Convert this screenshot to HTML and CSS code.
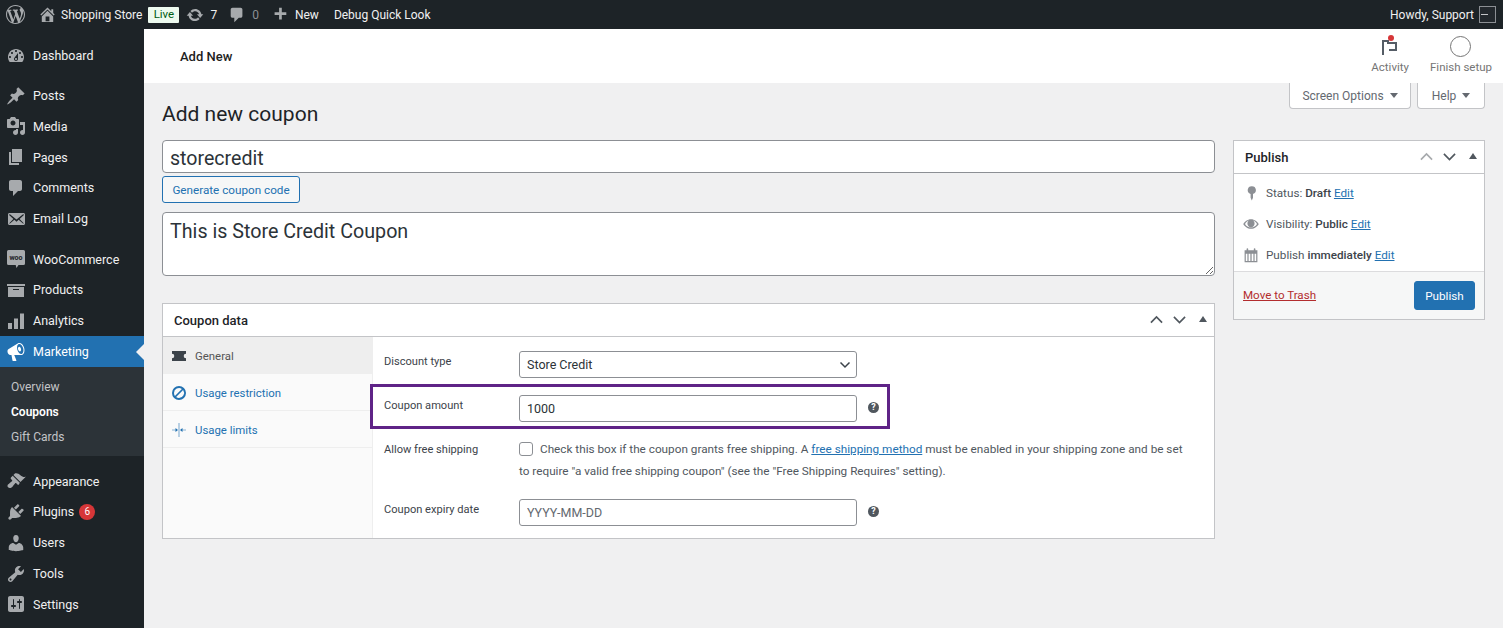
FILE: index.html
```html
<!DOCTYPE html>
<html lang="en">
<head>
<meta charset="utf-8">
<title>Add new coupon</title>
<link rel="stylesheet" href="styles.css">
</head>
<body>
<header class="adminbar">
  <div class="ab-left">
    <svg class="ab-logo" viewBox="0 0 20 20"><path d="M20 10c0-5.51-4.49-10-10-10C4.48 0 0 4.49 0 10c0 5.52 4.48 10 10 10 5.51 0 10-4.48 10-10zM7.78 15.37L4.37 6.22c.55-.02 1.17-.08 1.17-.08.5-.06.44-1.13-.06-1.11 0 0-1.45.11-2.37.11-.18 0-.37 0-.58-.01C4.12 2.69 6.87 1.11 10 1.11c2.33 0 4.45.87 6.05 2.34-.68-.11-1.65.39-1.65 1.58 0 .74.45 1.36.9 2.1.35.61.55 1.36.55 2.46 0 1.49-1.4 5-1.4 5l-3.03-8.37c.54-.02.82-.17.82-.17.5-.05.44-1.25-.06-1.22 0 0-1.44.12-2.38.12-.87 0-2.33-.12-2.33-.12-.5-.03-.56 1.2-.06 1.22l.92.08 1.26 3.41zM17.41 10c.24-.64.74-1.87.43-4.25.7 1.29 1.05 2.71 1.05 4.25 0 3.29-1.73 6.24-4.4 7.78.97-2.59 1.94-5.2 2.92-7.78zM6.1 18.09C3.12 16.65 1.11 13.53 1.11 10c0-1.3.23-2.48.72-3.59C3.25 10.3 4.67 14.2 6.1 18.09zm4.03-6.63l2.58 6.98c-.86.29-1.76.45-2.71.45-.79 0-1.57-.11-2.29-.33.81-2.38 1.62-4.74 2.42-7.1z"/></svg>
    <svg class="ab-icon ab-home" viewBox="0 0 20 20"><path d="M16 8.5l1.53 1.53-1.06 1.06L10 4.62l-6.47 6.47-1.06-1.06L10 2.5l4 4v-2h2v4zm-6-2.46l6 5.99V18H4v-5.97zM12 17v-5H8v5h4z"/></svg>
    <span class="ab-site">Shopping Store</span>
    <span class="ab-live">Live</span>
    <svg class="ab-icon ab-update" viewBox="0 0 20 20"><path d="M10.2 3.28c3.53 0 6.43 2.61 6.92 6h2.08l-3.5 4-3.5-4h2.32c-.45-1.97-2.21-3.44-4.32-3.44-1.45 0-2.73.71-3.54 1.78L4.95 5.66C6.23 4.2 8.11 3.28 10.2 3.28zm-.4 13.44c-3.52 0-6.43-2.61-6.92-6H.8l3.5-4c1.17 1.33 2.33 2.67 3.5 4H5.48c.45 1.97 2.21 3.44 4.32 3.44 1.45 0 2.73-.71 3.54-1.78l1.71 1.95c-1.28 1.46-3.15 2.39-5.25 2.39z"/></svg>
    <span class="ab-count">7</span>
    <svg class="ab-icon ab-comment" viewBox="0 0 20 20"><path d="M5 2h9c1.1 0 2 .9 2 2v7c0 1.1-.9 2-2 2h-2l-5 5v-5H5c-1.1 0-2-.9-2-2V4c0-1.1.9-2 2-2z"/></svg>
    <span class="ab-count ab-dim">0</span>
    <svg class="ab-icon ab-plus" viewBox="0 0 20 20"><path d="M17 7v3h-5v5H9v-5H4V7h5V2h3v5h5z"/></svg>
    <span class="ab-new">New</span>
    <span class="ab-debug">Debug Quick Look</span>
  </div>
  <div class="ab-right">
    <span>Howdy, Support</span>
    <span class="ab-avatar"><i class="ab-avatar-mark"></i></span>
  </div>
</header>

<div class="shell">
  <nav class="sidebar">
    <ul class="menu-group">
      <li class="menu-item"><svg class="mi" viewBox="0 0 20 20"><path d="M3.76 16h12.48c1.1-1.37 1.76-3.11 1.76-5 0-4.42-3.58-8-8-8s-8 3.58-8 8c0 1.89.66 3.63 1.76 5zM10 4c.55 0 1 .45 1 1s-.45 1-1 1-1-.45-1-1 .45-1 1-1zM6 6c.55 0 1 .45 1 1s-.45 1-1 1-1-.45-1-1 .45-1 1-1zm8 0c.55 0 1 .45 1 1s-.45 1-1 1-1-.45-1-1 .45-1 1-1zm-5.37 5.55L12 7v6c0 1.1-.9 2-2 2s-2-.9-2-2c0-.57.24-1.08.63-1.45zM4 10c.55 0 1 .45 1 1s-.45 1-1 1-1-.45-1-1 .45-1 1-1zm12 0c.55 0 1 .45 1 1s-.45 1-1 1-1-.45-1-1 .45-1 1-1zm-5 3c0-.55-.45-1-1-1s-1 .45-1 1 .45 1 1 1 1-.45 1-1z"/></svg>Dashboard</li>
    </ul>
    <ul class="menu-group">
      <li class="menu-item"><svg class="mi" viewBox="0 0 20 20"><path d="M10.44 3.02l1.82-1.82 6.36 6.35-1.83 1.82c-1.05-.68-2.48-.57-3.41.36l-.75.75c-.92.93-1.04 2.35-.35 3.41l-1.83 1.82-2.41-2.41-2.8 2.79c-.42.42-3.38 2.71-3.8 2.29s1.86-3.39 2.28-3.81l2.79-2.79L4.1 9.36l1.83-1.82c1.05.69 2.48.57 3.4-.36l.75-.75c.93-.92 1.05-2.35.36-3.41z"/></svg>Posts</li>
      <li class="menu-item"><svg class="mi" viewBox="0 0 20 20"><path d="M13 11V4c0-.55-.45-1-1-1h-1.67L9 1H5L3.67 3H2c-.55 0-1 .45-1 1v7c0 .55.45 1 1 1h10c.55 0 1-.45 1-1zM7 4.5c1.38 0 2.5 1.12 2.5 2.5S8.38 9.5 7 9.5 4.5 8.38 4.5 7 5.62 4.5 7 4.5zM14 6h5v10.5c0 1.38-1.12 2.5-2.5 2.5S14 17.88 14 16.5s1.12-2.5 2.5-2.5c.17 0 .34.02.5.05V9h-3V6zm-4 8.05V13h2v3.5c0 1.38-1.12 2.5-2.5 2.5S7 17.88 7 16.5 8.12 14 9.5 14c.17 0 .34.02.5.05z"/></svg>Media</li>
      <li class="menu-item"><svg class="mi" viewBox="0 0 20 20"><path d="M6 15V2h10v13H6zm-1 1h8v2H3V5h2v11z"/></svg>Pages</li>
      <li class="menu-item"><svg class="mi" viewBox="0 0 20 20"><path d="M5 2h9c1.1 0 2 .9 2 2v7c0 1.1-.9 2-2 2h-2l-5 5v-5H5c-1.1 0-2-.9-2-2V4c0-1.1.9-2 2-2z"/></svg>Comments</li>
      <li class="menu-item"><svg class="mi" viewBox="0 0 20 20"><path d="M19 14.5v-9c0-.83-.67-1.5-1.5-1.5H3.49c-.83 0-1.5.67-1.5 1.5v9c0 .83.67 1.5 1.5 1.5H17.5c.83 0 1.5-.67 1.5-1.5zm-1.31-9.11c.33.33.15.67-.03.84L13.6 9.95l3.9 4.06c.12.14.2.36.06.51-.13.16-.43.15-.56.05l-4.37-3.73-2.14 1.95-2.13-1.95-4.37 3.73c-.13.1-.43.11-.56-.05-.14-.15-.06-.37.06-.51l3.9-4.06-4.06-3.72c-.18-.17-.36-.51-.03-.84s.67-.17.95.07l6.24 5.04 6.25-5.04c.28-.24.62-.4.95-.07z"/></svg>Email Log</li>
    </ul>
    <ul class="menu-group menu-group-woo">
      <li class="menu-item"><svg class="mi mi-woo" viewBox="0 0 20 20"><path d="M2.5 1h15A1.5 1.5 0 0 1 19 2.500v12a1.500 1.500 0 0 1-1.500 1.500H12.500L10.500 19l-.8-3H2.500A1.500 1.500 0 0 1 1 14.500v-12A1.500 1.500 0 0 1 2.500 1z"/><text class="woo-word" x="10" y="11" text-anchor="middle">woo</text></svg>WooCommerce</li>
      <li class="menu-item"><svg class="mi" viewBox="0 0 20 20"><path d="M19 4v2H1V4h18zM2 7h16v10H2V7zm11 3V9H7v1h6z"/></svg>Products</li>
      <li class="menu-item"><svg class="mi" viewBox="0 0 20 20"><path d="M2 12h4v6H2zM8 7.500h4V18H8zM14 2.500h4V18h-4z"/></svg>Analytics</li>
      <li class="menu-item menu-current"><svg class="mi" viewBox="0 0 20 20"><path d="M18.150 5.940c.46 1.620.38 3.220-.02 4.480-.42 1.280-1.260 2.180-2.300 2.480-.16.06-.26.06-.4.06-.06.02-.12.02-.18.02-.06.02-.14.02-.22.02h-6.800l2.220 5.500c.02.14-.06.26-.14.34-.08.10-.24.16-.34.16H6.950c-.1 0-.26-.06-.34-.16-.08-.08-.16-.2-.14-.34l-1-5.500H4.250l-.02-.02c-.5.06-1.080-.18-1.540-.62s-.88-1.080-1.060-1.880c-.24-.8-.2-1.560-.02-2.200.18-.62.58-1.080 1.060-1.300l.02-.02 9-5.400c.1-.06.18-.1.24-.16.06-.04.14-.08.24-.12.16-.08.28-.12.5-.18 1.040-.3 2.240.1 3.220.98s1.780 2.180 2.260 3.860zm-2.580 5.980h-.02c.4-.1.740-.34 1.040-.7.58-.7.860-1.760.860-3.040 0-.64-.1-1.300-.28-1.980-.34-1.360-1.020-2.500-1.780-3.240s-1.680-1.100-2.460-.88c-.82.22-1.400.96-1.700 2-.32 1.040-.28 2.360.06 3.720.38 1.360 1 2.500 1.800 3.240.78.74 1.620 1.100 2.480.88zm-2.540-7.080c.22-.04.42-.02.62.04.38.16.76.48 1.020 1s.42 1.200.42 1.780c0 .3-.04.56-.12.8-.18.48-.44.84-.86.94-.34.1-.8-.06-1.140-.4-.36-.34-.66-.8-.84-1.420-.4-1.240-.1-2.400.9-2.740z"/></svg>Marketing<i class="menu-arrow"></i></li>
      <li class="submenu">
        <a class="sub-item">Overview</a>
        <a class="sub-item sub-current">Coupons</a>
        <a class="sub-item">Gift Cards</a>
      </li>
    </ul>
    <ul class="menu-group">
      <li class="menu-item"><svg class="mi" viewBox="0 0 20 20"><path d="M14.480 11.060L7.410 3.990l1.500-1.500c.5-.56 2.300-.47 3.510.32 1.210.8 1.430 1.280 2.910 2.100 1.180.64 2.450 1.260 4.450.85zm-.71.71L6.700 4.700 4.930 6.470c-.39.39-.39 1.020 0 1.410l1.060 1.060c.39.39.39 1.030 0 1.420-.6.6-1.430 1.110-2.210 1.690-.35.26-.7.53-1.010.84C1.430 13.230.99 15.200 2.100 16.300c1.100 1.110 3.070.67 4.410-.67.31-.31.58-.66.84-1.010.58-.78 1.090-1.610 1.690-2.210.39-.39 1.030-.39 1.420 0l1.060 1.060c.39.39 1.020.39 1.410 0z"/></svg>Appearance</li>
      <li class="menu-item"><svg class="mi" viewBox="0 0 20 20"><path d="M13.110 4.360L9.870 7.600 8 5.730l3.240-3.240c.35-.34 1.050-.2 1.560.32.52.51.66 1.210.31 1.550zm-8 1.770l.91-1.120 9.010 9.010-1.190.84c-.71.71-2.630 1.160-3.820 1.160H6.140L4.900 17.260c-.59.59-1.540.59-2.120 0-.59-.58-.59-1.530 0-2.120l1.240-1.240v-3.880c0-1.130.4-3.190 1.090-3.890zm7.260 3.970l3.240-3.240c.34-.35 1.040-.21 1.550.31.52.51.66 1.210.31 1.550l-3.240 3.250z"/></svg>Plugins<span class="badge">6</span></li>
      <li class="menu-item"><svg class="mi" viewBox="0 0 20 20"><path d="M10 9.250c-2.270 0-2.730-3.440-2.730-3.440C7 4.020 7.820 2 9.970 2c2.160 0 2.980 2.020 2.710 3.810 0 0-.41 3.440-2.680 3.440zm0 2.570L12.720 10c2.390 0 4.520 2.330 4.520 4.530v2.490s-3.650 1.130-7.240 1.130c-3.650 0-7.240-1.130-7.240-1.130v-2.490c0-2.250 1.940-4.480 4.470-4.480z"/></svg>Users</li>
      <li class="menu-item"><svg class="mi" viewBox="0 0 20 20"><path d="M16.680 9.770c-1.340 1.340-3.300 1.670-4.950.99l-5.410 6.520c-.99.99-2.590.99-3.580 0s-.99-2.590 0-3.570l6.520-5.420c-.68-1.650-.35-3.610.99-4.950 1.280-1.280 3.120-1.620 4.720-1.060l-2.890 2.890 2.820 2.820 2.860-2.870c.53 1.580.18 3.390-1.080 4.650zM3.810 16.210c.4.39 1.040.39 1.430 0 .4-.4.4-1.040 0-1.430-.39-.4-1.030-.4-1.430 0-.39.39-.39 1.030 0 1.430z"/></svg>Tools</li>
      <li class="menu-item"><svg class="mi" viewBox="0 0 20 20"><path d="M18 16V4c0-1.100-.9-2-2-2H4c-1.100 0-2 .9-2 2v12c0 1.100.9 2 2 2h12c1.100 0 2-.9 2-2zM8 11h1c.55 0 1 .45 1 1s-.45 1-1 1H8v1.500c0 .28-.22.5-.5.5s-.5-.22-.5-.5V13H6c-.55 0-1-.45-1-1s.45-1 1-1h1V5.500c0-.28.22-.5.5-.5s.5.22.5.5V11zm5-2h-1c-.55 0-1-.45-1-1s.45-1 1-1h1V5.500c0-.28.22-.5.5-.5s.5.22.5.5V7h1c.55 0 1 .45 1 1s-.45 1-1 1h-1v5.500c0 .28-.22.5-.5.5s-.5-.22-.5-.5V9z"/></svg>Settings</li>
    </ul>
  </nav>

  <div class="main">
    <div class="wc-header">
      <h2 class="wc-title">Add New</h2>
      <div class="wc-activity">
        <div class="wc-tool">
          <span class="wc-tool-icon wc-flag">
            <svg class="flag-svg" viewBox="0 0 16 16"><path d="M0 1h7v2h8v9H7v-2h6V5H5V3H2v13H0z"/></svg>
            <i class="flag-dot"></i>
          </span>
          <span class="wc-tool-label">Activity</span>
        </div>
        <div class="wc-tool">
          <span class="wc-tool-icon"><i class="setup-ring"></i></span>
          <span class="wc-tool-label">Finish setup</span>
        </div>
      </div>
    </div>

    <div class="content">
      <div class="title-row">
        <h1 class="page-title">Add new coupon</h1>
        <div class="meta-links">
          <span class="meta-link">Screen Options<i class="caret"></i></span>
          <span class="meta-link">Help<i class="caret"></i></span>
        </div>
      </div>

      <div class="columns">
        <div class="col-main">
          <input class="code-input" type="text" value="storecredit">
          <button class="gen-btn" type="button">Generate coupon code</button>
          <textarea class="desc-input">This is Store Credit Coupon</textarea>

          <section class="box coupon-box">
            <div class="box-head">
              <h2 class="box-title">Coupon data</h2>
              <div class="handles">
                <svg class="h-chev" viewBox="0 0 14 10"><path d="M1 8l6-6 6 6"/></svg>
                <svg class="h-chev" viewBox="0 0 14 10"><path d="M1 2l6 6 6-6"/></svg>
                <i class="h-tri"></i>
              </div>
            </div>
            <div class="coupon-body">
              <ul class="tabs">
                <li class="tab tab-active">
                  <svg class="tab-icon" viewBox="0 0 14 12"><path d="M0 1h14v2.700a2.300 2.300 0 0 0 0 4.600V11H0V8.300a2.300 2.300 0 0 0 0-4.600z"/></svg>General
                </li>
                <li class="tab">
                  <svg class="tab-icon" viewBox="0 0 14 14"><path d="M7 0a7 7 0 1 0 0 14A7 7 0 0 0 7 0zM2 7a5 5 0 0 1 7.900-4.100L2.900 9.900A5 5 0 0 1 2 7zm5 5a5 5 0 0 1-2.900-.9l7-7A5 5 0 0 1 7 12z"/></svg>Usage restriction
                </li>
                <li class="tab">
                  <svg class="tab-icon" viewBox="0 0 14 14"><path d="M6.700 0h.6v14h-.6zM0 6.700h3.500V5L6 7 3.500 9V7.300H0zM14 6.700h-3.500V5L8 7l2.500 2V7.300H14z"/></svg>Usage limits
                </li>
              </ul>
              <div class="panel">
                <div class="field">
                  <label class="f-label">Discount type</label>
                  <div class="f-control">
                    <div class="select">Store Credit
                      <svg class="select-chev" viewBox="0 0 12 8"><path d="M1.500 1.500L6 6l4.500-4.500"/></svg>
                    </div>
                  </div>
                </div>
                <div class="field">
                  <label class="f-label">Coupon amount</label>
                  <div class="f-control">
                    <input class="text-input" type="text" value="1000">
                    <span class="help">?</span>
                  </div>
                  <div class="highlight"></div>
                </div>
                <div class="field">
                  <label class="f-label">Allow free shipping</label>
                  <p class="f-desc"><i class="checkbox"></i>Check this box if the coupon grants free shipping. A <a class="link">free shipping method</a> must be enabled in your shipping zone and be set<br>to require "a valid free shipping coupon" (see the "Free Shipping Requires" setting).</p>
                </div>
                <div class="field">
                  <label class="f-label">Coupon expiry date</label>
                  <div class="f-control">
                    <input class="text-input" type="text" placeholder="YYYY-MM-DD">
                    <span class="help">?</span>
                  </div>
                </div>
              </div>
            </div>
          </section>
        </div>

        <aside class="col-side">
          <section class="box">
            <div class="box-head">
              <h2 class="box-title">Publish</h2>
              <div class="handles">
                <svg class="h-chev h-chev-off" viewBox="0 0 14 10"><path d="M1 8l6-6 6 6"/></svg>
                <svg class="h-chev" viewBox="0 0 14 10"><path d="M1 2l6 6 6-6"/></svg>
                <i class="h-tri"></i>
              </div>
            </div>
            <div class="pub-rows">
              <div class="pub-row"><svg class="pub-icon" viewBox="0 0 20 20"><path d="M11 1.500a5 5 0 0 1 1.500 9.800V16l-1.500 3.500L9.500 16v-4.700A5 5 0 0 1 11 1.500z"/></svg><span>Status: <b>Draft</b> <a class="link">Edit</a></span></div>
              <div class="pub-row"><svg class="pub-icon" viewBox="0 0 20 20"><path fill-rule="evenodd" d="M10 4C5.500 4 2 7 .3 10 2 13 5.500 16 10 16s8-3 9.700-6C18 7 14.500 4 10 4zm0 10.500c-3.300 0-6-2-7.500-4.500C3.700 8 5.500 6.500 7.500 5.700a4.500 4.500 0 1 0 5 0C14.500 6.500 16.300 8 17.500 10c-1.500 2.500-4.200 4.500-7.500 4.500z"/></svg><span>Visibility: <b>Public</b> <a class="link">Edit</a></span></div>
              <div class="pub-row"><svg class="pub-icon" viewBox="0 0 20 20"><path d="M2 4h2.500V2.500a1 1 0 0 1 2 0V4h7V2.500a1 1 0 0 1 2 0V4H18v15H2zm1.500 4.500v9h2v-9zm3.500 0v9h2.200v-9zm3.800 0v9H13v-9zm3.700 0v9h2v-9z"/></svg><span>Publish <b>immediately</b> <a class="link">Edit</a></span></div>
            </div>
            <div class="pub-foot">
              <a class="trash">Move to Trash</a>
              <button class="pub-btn" type="button">Publish</button>
            </div>
          </section>
        </aside>
      </div>
    </div>
  </div>
</div>
</body>
</html>
```
FILE: styles.css
```css
* { box-sizing: border-box; }
html, body { margin: 0; padding: 0; }
body {
  width: 1503px;
  height: 628px;
  overflow: hidden;
  background: #f0f0f1;
  font-family: Roboto, "Noto Sans", "Liberation Sans", sans-serif;
  font-size: 12.500px;
  color: #3c434a;
}
ul { list-style: none; margin: 0; padding: 0; }
h1, h2, p { margin: 0; }
input, textarea, button { font-family: inherit; letter-spacing: inherit; }

/* admin bar */
.adminbar {
  height: 29px;
  background: #1d2327;
  color: #f0f0f1;
  display: flex;
  justify-content: space-between;
  align-items: center;
  font-size: 12px;
}
.ab-left, .ab-right { display: flex; align-items: center; }
.ab-logo { width: 19px; height: 19px; margin-left: 6px; fill: #a7aaad; }
.ab-icon { width: 18px; height: 18px; fill: #a7aaad; flex: none; }
.ab-home { margin-left: 12.500px; width: 19px; height: 19px; }
.ab-site { margin-left: 4.500px; }
.ab-live {
  margin-left: 6px;
  width: 31px;
  height: 16px;
  line-height: 15px;
  text-align: center;
  font-size: 11.500px;
  border-radius: 1px;
  background: #edfaef;
  color: #005c12;
}
.ab-update { margin-left: 7px; }
.ab-count { margin-left: 6px; }
.ab-dim { color: #8c8f94; }
.ab-comment { margin-left: 11px; }
.ab-plus { margin-left: 12px; }
.ab-new { margin-left: 6px; }
.ab-debug { margin-left: 15px; }
.ab-right { padding-right: 7px; gap: 5px; }
.ab-avatar {
  width: 17px;
  height: 17px;
  border: 1px solid #8c8f94;
  background: #23282d;
  display: flex;
  align-items: center;
  padding-left: 1px;
}
.ab-avatar-mark { width: 7px; height: 1px; background: #c3c4c7; }

/* sidebar */
.shell { display: flex; height: 599px; }
.sidebar {
  width: 144px;
  flex: none;
  background: #1d2327;
  padding-top: 11.400px;
}
.menu-group { margin-bottom: 9px; }
.menu-group-woo { margin-top: 9.600px; margin-bottom: 9.800px; }
.menu-item {
  position: relative;
  height: 30.800px;
  display: flex;
  align-items: center;
  padding-left: 6px;
  color: #f0f0f1;
}
.mi { width: 20px; height: 20px; margin-right: 7px; fill: #a7aaad; flex: none; }
.mi-woo { fill: #a7aaad; }
.woo-word { font-size: 7px; font-weight: 700; fill: #1d2327; }
.menu-current { background: #2271b1; color: #fff; }
.menu-current .mi { fill: #fff; }
.menu-arrow {
  position: absolute;
  right: 0;
  top: 50%;
  margin-top: -8px;
  border: 8px solid transparent;
  border-right-color: #f0f0f1;
  border-left-width: 0;
}
.submenu {
  background: #2c3338;
  padding: 8px 0 6px;
}
.sub-item {
  display: block;
  height: 25px;
  line-height: 25px;
  padding-left: 11px;
  font-size: 12px;
  color: #c3c4c7;
}
.sub-current { color: #fff; font-weight: 600; }
.badge {
  width: 16px;
  height: 16px;
  margin-left: 5px;
  border-radius: 50%;
  background: #d63638;
  color: #fff;
  font-size: 10px;
  line-height: 16px;
  text-align: center;
}

/* main */
.main { flex: 1; min-width: 0; background: #f0f0f1; }
.wc-header {
  height: 54px;
  background: #fff;
  display: flex;
  align-items: center;
  justify-content: space-between;
  padding: 0 11px 0 36px;
}
.wc-title { font-size: 13px; font-weight: 500; color: #1e1e1e; }
.wc-activity { display: flex; gap: 21px; margin-top: -2px; }
.wc-tool { display: flex; flex-direction: column; align-items: center; }
.wc-tool-icon {
  position: relative;
  height: 24px;
  display: flex;
  align-items: center;
  justify-content: center;
}
.flag-svg { width: 16px; height: 16px; fill: #555d66; margin-top: 2px; }
.flag-dot {
  position: absolute;
  top: 1px;
  left: 6px;
  width: 6px;
  height: 6px;
  border-radius: 50%;
  background: #d63638;
}
.setup-ring {
  width: 21px;
  height: 21px;
  border-radius: 50%;
  border: 1.500px solid #757575;
}
.wc-tool-label { font-size: 11.500px; line-height: 18px; color: #757575; }

.content { padding: 0 18px; }
.title-row { height: 57px; display: flex; justify-content: space-between; align-items: flex-start; }
.page-title { font-size: 21px; font-weight: 400; line-height: 30px; padding-top: 16px; color: #1d2327; }
.meta-links { display: flex; gap: 6px; }
.meta-link {
  height: 26px;
  display: flex;
  align-items: center;
  justify-content: center;
  font-size: 12px;
  color: #646970;
  background: #fff;
  border: 1px solid #c3c4c7;
  border-top: 0;
  border-radius: 0 0 4px 4px;
  white-space: nowrap;
}
.caret {
  margin-left: 6px;
  border: 4px solid transparent;
  border-top: 5px solid #646970;
  border-bottom: 0;
}
.meta-link:first-child { width: 122px; }
.meta-link:last-child { width: 68px; }

.columns { display: grid; grid-template-columns: 1053px 252px; column-gap: 18px; align-items: start; }

.code-input {
  display: block;
  width: 100%;
  height: 33px;
  padding: 3px 7px 0;
  font-size: 19.600px;
  color: #2c3338;
  background: #fff;
  border: 1px solid #8c8f94;
  border-radius: 4px;
  outline: 0;
}
.gen-btn {
  display: block;
  margin-top: 3px;
  width: 138px;
  height: 27px;
  padding: 0;
  font-size: 11.700px;
  color: #2271b1;
  background: #f6f7f7;
  border: 1px solid #2271b1;
  border-radius: 3px;
}
.desc-input {
  display: block;
  margin-top: 9px;
  width: 100%;
  height: 64px;
  padding: 5px 7px;
  font-size: 19.700px;
  line-height: 27px;
  color: #2c3338;
  background: #fff;
  border: 1px solid #8c8f94;
  border-radius: 4px;
  outline: 0;
  resize: vertical;
}
.box { background: #fff; border: 1px solid #c3c4c7; }
.coupon-box { margin-top: 27px; height: 236px; }
.box-head {
  height: 33px;
  display: flex;
  align-items: center;
  justify-content: space-between;
  padding: 0 7px 0 11px;
  border-bottom: 1px solid #c3c4c7;
}
.box-title { font-size: 13px; font-weight: 500; color: #1d2327; }
.handles { display: flex; align-items: center; gap: 10px; }
.h-chev { width: 13px; height: 9.500px; fill: none; stroke: #50575e; stroke-width: 1.800; }
.h-chev-off { stroke: #a7aaad; }
.h-tri {
  margin-left: 3px;
  border: 4px solid transparent;
  border-bottom: 6px solid #50575e;
  border-top: 0;
  margin-top: -2px;
}

.coupon-body { display: flex; height: 201px; }
.tabs {
  width: 210px;
  flex: none;
  background: #fafafa;
  border-right: 1px solid #eee;
}
.tab {
  height: 37px;
  display: flex;
  align-items: center;
  padding: 1px 0 0 9px;
  font-size: 11.400px;
  color: #2271b1;
  border-bottom: 1px solid #eee;
}
.tab-icon { width: 14px; height: 14px; margin-right: 9px; fill: #2271b1; flex: none; }
.tab-active { background: #eee; color: #555; }
.tab-active .tab-icon { fill: #3c434a; }

.panel { flex: 1; padding: 14px 0 0 11px; display: flex; flex-direction: column; gap: 17px; }
.field { position: relative; display: grid; grid-template-columns: 135px 1fr; font-size: 11.750px; }
.f-label { line-height: 22px; font-size: 11.100px; color: #3c434a; }
.f-control { display: flex; align-items: center; }
.select, .text-input {
  width: 338px;
  height: 27px;
  background: #fff;
  border: 1px solid #8c8f94;
  border-radius: 3px;
  padding: 0 7px;
  font-size: 12.500px;
  color: #2c3338;
  outline: 0;
}
.select { position: relative; line-height: 25px; }
.select-chev {
  position: absolute;
  right: 5px;
  top: 9px;
  width: 12px;
  height: 8px;
  fill: none;
  stroke: #3c434a;
  stroke-width: 1.500;
}
.text-input::placeholder { color: #646970; opacity: 1; }
.help {
  width: 11px;
  height: 11px;
  margin-left: 11px;
  margin-top: -2px;
  border-radius: 50%;
  background: #50575e;
  color: #fff;
  font-size: 9px;
  font-weight: 700;
  line-height: 11px;
  text-align: center;
}
.highlight {
  position: absolute;
  top: -11px;
  left: -14px;
  width: 520px;
  height: 45px;
  border: 3px solid #5f2387;
  pointer-events: none;
}
.f-desc { width: 680px; line-height: 21.500px; color: #50575e; white-space: nowrap; }
.checkbox {
  display: inline-block;
  width: 14px;
  height: 14px;
  margin-right: 7px;
  vertical-align: -3px;
  background: #fff;
  border: 1px solid #8c8f94;
  border-radius: 3px;
}
.link { color: #2271b1; text-decoration: underline; }

.pub-rows { padding-top: 3px; height: 97px; }
.pub-row {
  height: 31px;
  display: flex;
  align-items: center;
  padding-left: 9px;
  font-size: 11.700px;
  color: #50575e;
}
.pub-row b { font-weight: 500; color: #3c434a; }
.pub-icon { width: 16px; height: 16px; margin-right: 7px; fill: #8c8f94; flex: none; }
.pub-foot {
  height: 48px;
  display: flex;
  align-items: center;
  justify-content: space-between;
  padding: 0 9px;
  background: #f6f7f7;
  border-top: 1px solid #dcdcde;
}
.trash { font-size: 11.600px; color: #b32d2e; text-decoration: underline; margin-top: -2px; }
.pub-btn {
  width: 61px;
  height: 29px;
  padding: 0;
  font-size: 11.700px;
  color: #fff;
  background: #2271b1;
  border: 1px solid #2271b1;
  border-radius: 3px;
}
```
